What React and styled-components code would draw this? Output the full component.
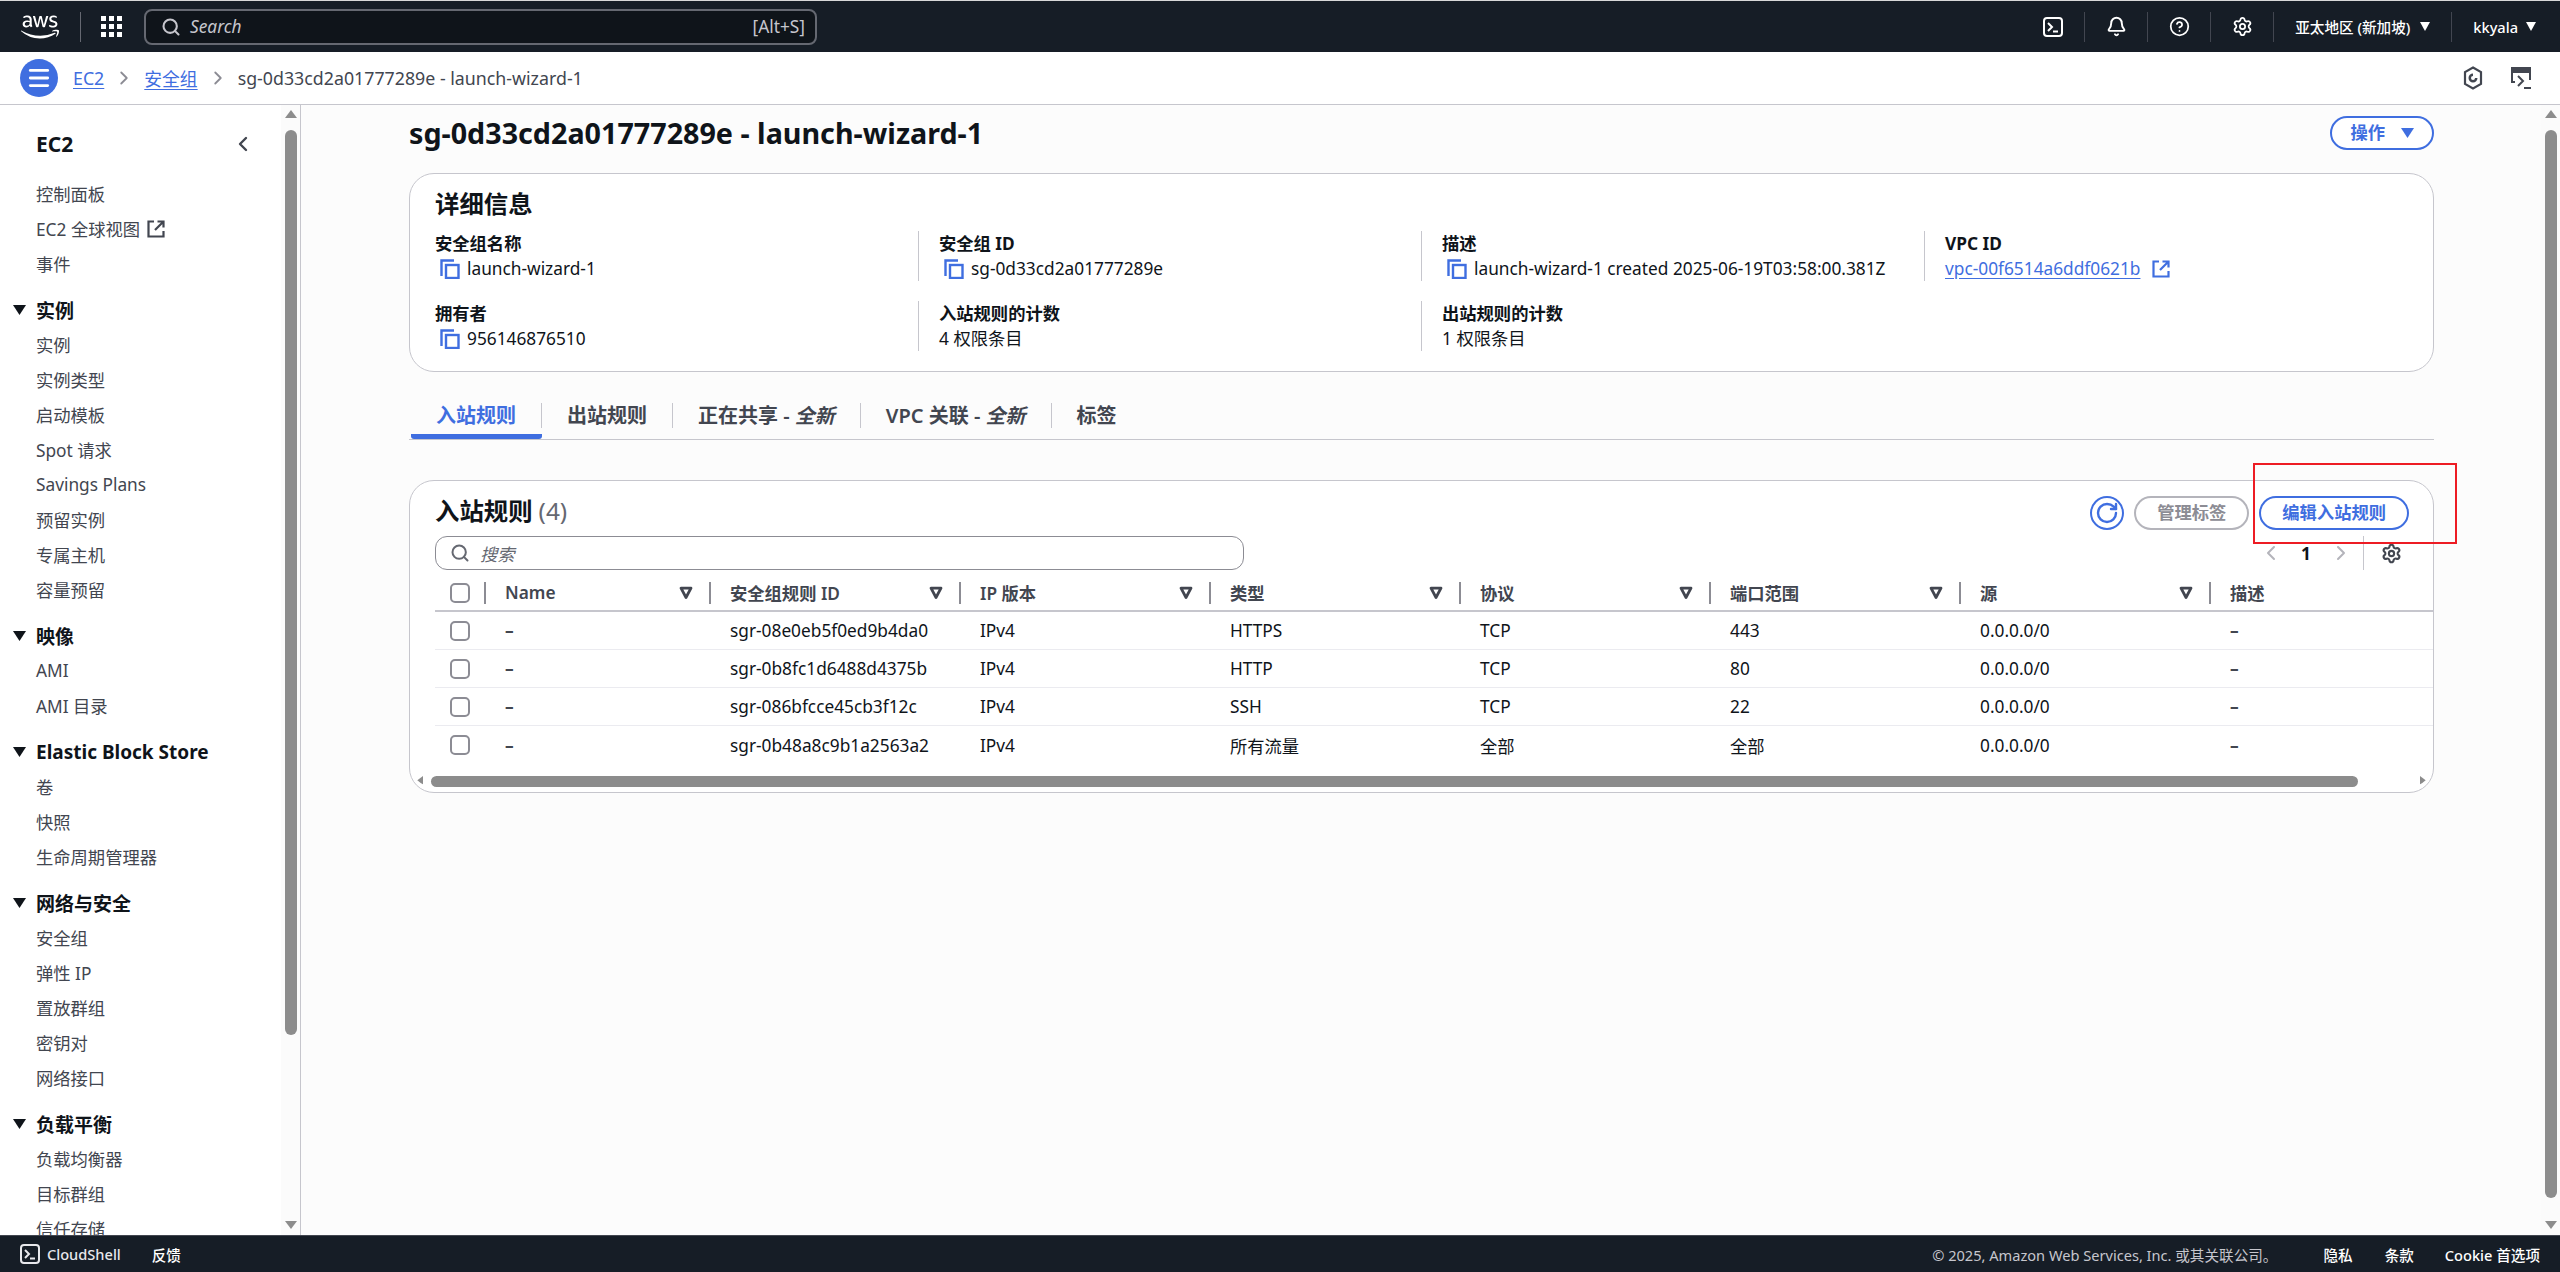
import React from 'react';
import styled, { createGlobalStyle } from 'styled-components';
import { FaAws } from 'react-icons/fa';
import {
  Bell,
  ChevronLeft,
  ChevronRight,
  CircleHelp,
  Menu,
  RotateCw,
  Search,
  Settings,
} from 'lucide-react';

const BLUE = '#3f6ee0';
const INK = '#0f141a';
const GREY = '#424650';
const LINE = '#c6c6cd';
const THUMB = '#8c8c8c';
const BAR = '#161d26';

const GlobalStyle = createGlobalStyle`
  html, body {
    margin: 0;
    height: 100%;
    overflow: hidden;
    background: #fff;
  }
  body {
    font-family: "Noto Sans", "Noto Sans CJK SC", sans-serif;
    font-size: 17.3px;
    color: ${INK};
  }
`;

const Page = styled.div`
  display: flex;
  flex-direction: column;
  height: 1272px;
`;

/* top navigation */
const TopBar = styled.header`
  display: flex;
  align-items: center;
  height: 52px;
  box-sizing: border-box;
  border-top: 1px solid #d8d8d8;
  background: ${BAR};
  color: #fff;
`;
const LogoBox = styled.div`
  display: flex;
  align-items: center;
  justify-content: center;
  width: 81px;
  height: 30px;
  box-sizing: border-box;
  border-right: 1px solid #656871;
  font-size: 38px;
`;
const AppGrid = styled.div`
  display: grid;
  grid-template-columns: repeat(3, 5px);
  grid-auto-rows: 5px;
  gap: 3px;
  margin: 0 22px 0 20px;
`;
const AppDot = styled.span`
  background: #fff;
`;
const SearchBox = styled.div`
  display: flex;
  align-items: center;
  width: 673px;
  height: 36px;
  box-sizing: border-box;
  padding: 0 10px 0 15px;
  border: 2px solid #656871;
  border-radius: 8px;
  background: #0f141a;
  color: #c6c6cd;
`;
const SearchHint = styled.span`
  flex: 1;
  margin-left: 9px;
  font-size: 17.3px;
  font-style: italic;
`;
const SearchKey = styled.span`
  font-size: 17.3px;
`;
const TopRight = styled.div`
  display: flex;
  align-items: center;
  margin-left: auto;
  padding-right: 3px;
`;
const TopCell = styled.div`
  display: flex;
  align-items: center;
  justify-content: center;
  width: 62px;
  height: 30px;
  border-right: 1px solid #424650;
`;
const TopMenu = styled.div`
  display: flex;
  align-items: center;
  gap: ${(p) => p.$gap || 10}px;
  height: 30px;
  padding: 0 ${(p) => p.$pad || 21}px 0 21px;
  font-size: 14.6px;
  font-weight: 500;
  border-right: ${(p) => (p.$last ? 'none' : '1px solid #424650')};
`;

/* breadcrumb strip */
const CrumbBar = styled.nav`
  display: flex;
  align-items: center;
  height: 53px;
  box-sizing: border-box;
  padding: 0 28px 0 20px;
  border-bottom: 1px solid ${LINE};
  background: #fff;
  font-size: 17.8px;
`;
const MenuButton = styled.div`
  display: flex;
  align-items: center;
  justify-content: center;
  width: 38px;
  height: 38px;
  margin-right: 15px;
  border-radius: 50%;
  background: ${BLUE};
  color: #fff;
`;
const CrumbLink = styled.a`
  color: ${BLUE};
  text-decoration: underline;
  text-underline-offset: 3px;
`;
const CrumbSep = styled.span`
  display: flex;
  width: 40px;
  justify-content: center;
  color: #8c8c94;
`;
const CrumbText = styled.span`
  color: ${GREY};
`;
const CrumbTools = styled.div`
  display: flex;
  align-items: center;
  gap: 27px;
  margin-left: auto;
  color: ${GREY};
`;

const Body = styled.div`
  flex: 1;
  display: flex;
  min-height: 0;
`;

/* left navigation */
const Sidebar = styled.aside`
  display: flex;
  width: 301px;
  flex: none;
  box-sizing: border-box;
  border-right: 1px solid ${LINE};
  overflow: hidden;
`;
const SideNav = styled.div`
  flex: 1;
  padding-top: 21px;
  min-width: 0;
`;
const SideTitle = styled.div`
  display: flex;
  align-items: center;
  justify-content: space-between;
  height: 36px;
  padding: 0 26px 0 36px;
  margin-bottom: 14px;
  font-size: 21px;
  font-weight: 700;
  color: ${GREY};
`;
const SideTitleText = styled.span`
  color: ${INK};
`;
const SideItem = styled.div`
  display: flex;
  align-items: center;
  gap: 7px;
  height: 35px;
  padding-left: 36px;
  color: ${GREY};
  white-space: nowrap;
`;
const SideSection = styled.div`
  display: flex;
  align-items: center;
  gap: 10px;
  height: 35px;
  margin-top: 11px;
  padding-left: 13px;
  font-size: 19px;
  font-weight: 700;
  white-space: nowrap;
`;
const Rail = styled.div`
  display: flex;
  flex-direction: column;
  align-items: center;
  flex: none;
  width: 19px;
  box-sizing: border-box;
  padding: 5px 0 6px;
  background: #fbfbfb;
`;
const RailThumb = styled.div`
  width: 12px;
  height: ${(p) => p.$size}px;
  margin-top: 12px;
  border-radius: 6px;
  background: ${THUMB};
`;
const RailDown = styled.div`
  margin-top: auto;
  display: flex;
`;

/* main column */
const Main = styled.main`
  flex: 1;
  min-width: 0;
  padding: 10px 107px 0 108px;
  background: #fcfcfc;
`;
const PageHead = styled.div`
  display: flex;
  align-items: center;
  justify-content: space-between;
  height: 36px;
  margin-bottom: 22px;
`;
const PageTitle = styled.h1`
  margin: 0;
  font-size: 28.7px;
  font-weight: 700;
  line-height: 36px;
`;
const PillButton = styled.button`
  display: flex;
  align-items: center;
  justify-content: center;
  gap: ${(p) => p.$gap || 0}px;
  height: 34px;
  box-sizing: border-box;
  padding: 0 ${(p) => p.$pad || 21}px;
  border: 2px solid ${(p) => (p.$off ? '#b4b4bb' : BLUE)};
  border-radius: 17px;
  background: #fff;
  color: ${(p) => (p.$off ? '#8c8c94' : BLUE)};
  font-family: inherit;
  font-size: 17.3px;
  font-weight: 700;
  line-height: 1;
`;
const Card = styled.section`
  position: relative;
  box-sizing: border-box;
  border: 1px solid ${LINE};
  border-radius: 25px;
  background: #fff;
`;
const DetailCard = styled(Card)`
  height: 199px;
  padding: 14px 25px 0;
`;
const CardTitle = styled.h2`
  margin: 0;
  font-size: 24.4px;
  font-weight: 700;
  line-height: 31px;
`;
const DetailGrid = styled.div`
  display: grid;
  grid-template-columns: 483px 503px 503px 1fr;
  grid-auto-rows: 50px;
  row-gap: 20px;
  margin-top: 12px;
`;
const Field = styled.div`
  padding-left: ${(p) => (p.$first ? 0 : 20)}px;
  border-left: ${(p) => (p.$first ? 'none' : '1px solid #c6c6cd')};
`;
const FieldLabel = styled.div`
  font-weight: 700;
  line-height: 25px;
`;
const FieldValue = styled.div`
  display: flex;
  align-items: center;
  gap: 7px;
  line-height: 25px;
  white-space: nowrap;
`;
const CopyWrap = styled.span`
  display: flex;
  margin-left: 5px;
  color: ${BLUE};
`;
const ValueLink = styled.a`
  color: ${BLUE};
  text-decoration: underline;
  text-underline-offset: 3px;
`;

/* tabs */
const TabRow = styled.div`
  display: flex;
  align-items: flex-start;
  height: 68px;
  box-sizing: border-box;
  margin-bottom: 40px;
  padding: 28px 0 0 2px;
  border-bottom: 1px solid ${LINE};
`;
const Tab = styled.div`
  height: 39px;
  box-sizing: border-box;
  padding-top: 3px;
  border-bottom: 5px solid ${(p) => (p.$active ? BLUE : 'transparent')};
  border-radius: 0 0 3px 3px;
`;
const TabLabel = styled.div`
  height: 25px;
  padding: 0 25px;
  font-size: 20px;
  font-weight: 600;
  line-height: 25px;
  white-space: nowrap;
  color: ${(p) => (p.$active ? BLUE : GREY)};
  border-right: ${(p) => (p.$last ? 'none' : '1px solid #c6c6cd')};
`;

/* rules table */
const RulesCard = styled(Card)`
  height: 313px;
  padding-top: 15px;
`;
const RulesHead = styled.div`
  display: flex;
  align-items: center;
  height: 34px;
  padding: 0 24px 0 25px;
`;
const RulesTitle = styled(CardTitle)`
  margin-top: -5px;
`;
const RulesCount = styled.span`
  margin-left: 6px;
  font-weight: 400;
  color: #656871;
`;
const RulesActions = styled.div`
  display: flex;
  align-items: center;
  gap: 10px;
  margin-left: auto;
`;
const RoundIcon = styled.div`
  display: flex;
  align-items: center;
  justify-content: center;
  width: 34px;
  height: 34px;
  box-sizing: border-box;
  border: 2px solid ${BLUE};
  border-radius: 50%;
  background: #fff;
  color: ${BLUE};
`;
const Callout = styled.div`
  position: absolute;
  left: 1843px;
  top: -18px;
  width: 204px;
  height: 81px;
  box-sizing: border-box;
  border: 2px solid #ed1c24;
  pointer-events: none;
`;
const FilterRow = styled.div`
  display: flex;
  align-items: center;
  justify-content: space-between;
  height: 34px;
  margin-top: 6px;
  padding: 0 31px 0 25px;
`;
const FilterBox = styled.div`
  display: flex;
  align-items: center;
  gap: 10px;
  width: 809px;
  height: 34px;
  box-sizing: border-box;
  padding: 0 14px;
  border: 1px solid #8c8c94;
  border-radius: 12px;
  color: #656871;
  background: #fff;
`;
const FilterHint = styled.span`
  font-style: italic;
  font-size: 17.3px;
`;
const Pager = styled.div`
  display: flex;
  align-items: center;
  color: #b4b4bb;
`;
const PagerNum = styled.span`
  width: 22px;
  margin: 0 12px;
  text-align: center;
  color: ${INK};
  font-weight: 700;
`;
const PagerPrefs = styled.div`
  display: flex;
  align-items: center;
  height: 34px;
  margin-left: 10px;
  padding-left: 17px;
  border-left: 1px solid ${LINE};
  color: ${GREY};
`;
const TableClip = styled.div`
  overflow: hidden;
  margin-top: 5px;
  border-radius: 0 0 24px 24px;
`;
const Row = styled.div`
  display: grid;
  grid-template-columns: 49px 225px repeat(6, 250px) 224px;
  align-items: center;
  margin-left: 25px;
  height: ${(p) => (p.$head ? 37 : 38)}px;
  box-sizing: border-box;
  border-bottom: ${(p) => (p.$head ? '2px solid #c6c6cd' : p.$last ? 'none' : '1px solid #ebebf0')};
`;
const HeadCell = styled.div`
  display: flex;
  align-items: center;
  justify-content: space-between;
  height: 22px;
  padding: 0 16px 0 19px;
  color: ${GREY};
  font-weight: 600;
  border-left: 2px solid #8c8c94;
  white-space: nowrap;
`;
const Cell = styled.div`
  padding-left: 21px;
  white-space: nowrap;
`;
const DashCell = styled(Cell)`
  font-weight: 700;
  color: ${GREY};
`;
const BoxCell = styled.div`
  padding-left: 15px;
  display: flex;
`;
const CheckBox = styled.span`
  width: 20px;
  height: 20px;
  box-sizing: border-box;
  border: 2px solid #8c8c94;
  border-radius: 5px;
  background: #fff;
`;
const HScroll = styled.div`
  display: flex;
  align-items: center;
  height: 11px;
  margin-top: 12px;
  padding: 0 5px;
`;
const HThumb = styled.div`
  width: 1927px;
  height: 11px;
  margin-left: 8px;
  border-radius: 6px;
  background: ${THUMB};
`;
const HEnd = styled.div`
  display: flex;
  margin-left: auto;
`;

/* footer */
const Footer = styled.footer`
  display: flex;
  align-items: center;
  height: 37px;
  padding: 0 20px;
  background: ${BAR};
  border-top: 1px solid #424650;
  box-sizing: border-box;
  color: #e8e8ec;
  font-size: 14.6px;
`;
const FootShell = styled.div`
  display: flex;
  align-items: center;
  gap: 7px;
  font-weight: 500;
`;
const FootLink = styled.span`
  margin-left: ${(p) => p.$gap || 0}px;
  font-weight: 500;
  color: #fff;
`;
const FootNote = styled.span`
  margin-left: auto;
  color: #c6c6cd;
`;

const Triangle = ({ dir = 'down', w = 12, h = 8, color = 'currentColor' }) => {
  const points = {
    down: `0,0 ${w},0 ${w / 2},${h}`,
    up: `0,${h} ${w},${h} ${w / 2},0`,
    left: `${w},0 ${w},${h} 0,${h / 2}`,
    right: `0,0 ${w},${h / 2} 0,${h}`,
  };
  return (
    <svg width={w} height={h} viewBox={`0 0 ${w} ${h}`}>
      <polygon points={points[dir]} fill={color} />
    </svg>
  );
};

const SortIcon = () => (
  <svg width="14" height="14" viewBox="0 0 14 14">
    <polygon points="2,2.2 12,2.2 7,11.5" fill="none" stroke="#424650" strokeWidth="2.8" strokeLinejoin="round" />
  </svg>
);

const CopyIcon = () => (
  <CopyWrap>
    <svg width="20" height="20" viewBox="0 0 20 20" fill="none" stroke="currentColor" strokeWidth="2.4">
      <path d="M1.5 17V1.5H14" />
      <rect x="6" y="6" width="12.5" height="13" />
    </svg>
  </CopyWrap>
);

const ExternalIcon = ({ size = 18 }) => (
  <svg width={size} height={size} viewBox="0 0 18 18" fill="none" stroke="currentColor" strokeWidth="2.2">
    <path d="M7 1.5H1.5v15h15V11" />
    <path d="M8 10l8-8M10.5 1.5h6v6" />
  </svg>
);

const ShellIcon = ({ size = 20, stroke = 2 }) => (
  <svg width={size} height={size} viewBox="0 0 20 20" fill="none" stroke="currentColor" strokeWidth={stroke}>
    <rect x="1" y="1" width="18" height="18" rx="3" />
    <path d="M5 6l4 4-4 4M10 14.5h5" />
  </svg>
);

const HexIcon = () => (
  <svg width="20" height="24" viewBox="0 0 20 24" fill="none" stroke="currentColor" strokeWidth="2.2">
    <path d="M10 1.5l8 4.6v11.8l-8 4.6-8-4.6V6.1z" />
    <path d="M10 7.5a4.5 4.5 0 1 0 4.5 4.5H10z" fill="currentColor" stroke="none" />
    <circle cx="10" cy="12" r="2" fill="#fff" stroke="none" />
  </svg>
);

const ScreenIcon = () => (
  <svg width="22" height="24" viewBox="0 0 22 24" fill="none" stroke="currentColor" strokeWidth="2">
    <path d="M5 16H2V2h18v12" />
    <path d="M2 2h18v4H2z" fill="currentColor" />
    <path d="M8 10l5 5-5 5M14 22h7" />
  </svg>
);

const Rails = ({ size }) => (
  <Rail>
    <Triangle dir="up" color={THUMB} />
    <RailThumb $size={size} />
    <RailDown>
      <Triangle dir="down" color={THUMB} />
    </RailDown>
  </Rail>
);

const navGroups = [
  { items: [['控制面板'], ['EC2 全球视图', true], ['事件']] },
  {
    title: '实例',
    items: [['实例'], ['实例类型'], ['启动模板'], ['Spot 请求'], ['Savings Plans'], ['预留实例'], ['专属主机'], ['容量预留']],
  },
  { title: '映像', items: [['AMI'], ['AMI 目录']] },
  { title: 'Elastic Block Store', items: [['卷'], ['快照'], ['生命周期管理器']] },
  { title: '网络与安全', items: [['安全组'], ['弹性 IP'], ['置放群组'], ['密钥对'], ['网络接口']] },
  { title: '负载平衡', items: [['负载均衡器'], ['目标群组'], ['信任存储']] },
];

const fields = [
  { label: '安全组名称', value: 'launch-wizard-1', copy: true },
  { label: '安全组 ID', value: 'sg-0d33cd2a01777289e', copy: true },
  { label: '描述', value: 'launch-wizard-1 created 2025-06-19T03:58:00.381Z', copy: true },
  { label: 'VPC ID', value: 'vpc-00f6514a6ddf0621b', link: true },
  { label: '拥有者', value: '956146876510', copy: true },
  { label: '入站规则的计数', value: '4 权限条目' },
  { label: '出站规则的计数', value: '1 权限条目' },
];

const tabs = [
  { label: '入站规则', active: true },
  { label: '出站规则' },
  { label: '正在共享 - ', tag: '全新' },
  { label: 'VPC 关联 - ', tag: '全新' },
  { label: '标签' },
];

const columns = ['Name', '安全组规则 ID', 'IP 版本', '类型', '协议', '端口范围', '源', '描述'];

const rules = [
  ['sgr-08e0eb5f0ed9b4da0', 'IPv4', 'HTTPS', 'TCP', '443'],
  ['sgr-0b8fc1d6488d4375b', 'IPv4', 'HTTP', 'TCP', '80'],
  ['sgr-086bfcce45cb3f12c', 'IPv4', 'SSH', 'TCP', '22'],
  ['sgr-0b48a8c9b1a2563a2', 'IPv4', '所有流量', '全部', '全部'],
];

export default function App() {
  return (
    <Page>
      <GlobalStyle />
      <TopBar>
        <LogoBox>
          <FaAws />
        </LogoBox>
        <AppGrid>
          {Array.from({ length: 9 }, (_, i) => (
            <AppDot key={i} />
          ))}
        </AppGrid>
        <SearchBox>
          <Search size={20} strokeWidth={2.5} />
          <SearchHint>Search</SearchHint>
          <SearchKey>[Alt+S]</SearchKey>
        </SearchBox>
        <TopRight>
          <TopCell>
            <ShellIcon size={20} />
          </TopCell>
          <TopCell>
            <Bell size={21} strokeWidth={2.2} />
          </TopCell>
          <TopCell>
            <CircleHelp size={21} strokeWidth={2} />
          </TopCell>
          <TopCell>
            <Settings size={21} strokeWidth={2} />
          </TopCell>
          <TopMenu>
            亚太地区 (新加坡)
            <Triangle w={10} h={9} color="#fff" />
          </TopMenu>
          <TopMenu $last $pad={0} $gap={8}>
            kkyala
            <Triangle w={10} h={9} color="#fff" />
          </TopMenu>
        </TopRight>
      </TopBar>

      <CrumbBar>
        <MenuButton>
          <Menu size={26} strokeWidth={2.6} />
        </MenuButton>
        <CrumbLink>EC2</CrumbLink>
        <CrumbSep>
          <ChevronRight size={22} />
        </CrumbSep>
        <CrumbLink>安全组</CrumbLink>
        <CrumbSep>
          <ChevronRight size={22} />
        </CrumbSep>
        <CrumbText>sg-0d33cd2a01777289e - launch-wizard-1</CrumbText>
        <CrumbTools>
          <HexIcon />
          <ScreenIcon />
        </CrumbTools>
      </CrumbBar>

      <Body>
        <Sidebar>
          <SideNav>
            <SideTitle>
              <SideTitleText>EC2</SideTitleText>
              <ChevronLeft size={24} strokeWidth={2.4} />
            </SideTitle>
            {navGroups.map((group, i) => (
              <div key={i}>
                {group.title && (
                  <SideSection>
                    <Triangle w={13} h={10} color={INK} />
                    {group.title}
                  </SideSection>
                )}
                {group.items.map(([text, external]) => (
                  <SideItem key={text}>
                    {text}
                    {external && <ExternalIcon />}
                  </SideItem>
                ))}
              </div>
            ))}
          </SideNav>
          <Rails size={905} />
        </Sidebar>

        <Main>
          <PageHead>
            <PageTitle>sg-0d33cd2a01777289e - launch-wizard-1</PageTitle>
            <PillButton $pad={18} $gap={16}>
              操作
              <Triangle w={13} h={10} color={BLUE} />
            </PillButton>
          </PageHead>

          <DetailCard>
            <CardTitle>详细信息</CardTitle>
            <DetailGrid>
              {fields.map((f, i) => (
                <Field key={f.label} $first={i % 4 === 0}>
                  <FieldLabel>{f.label}</FieldLabel>
                  <FieldValue>
                    {f.copy && <CopyIcon />}
                    {f.link ? (
                      <ValueLink>{f.value}</ValueLink>
                    ) : (
                      f.value
                    )}
                    {f.link && (
                      <CopyWrap>
                        <ExternalIcon />
                      </CopyWrap>
                    )}
                  </FieldValue>
                </Field>
              ))}
            </DetailGrid>
          </DetailCard>

          <TabRow>
            {tabs.map((t, i) => (
              <Tab key={t.label} $active={t.active}>
                <TabLabel $active={t.active} $last={i === tabs.length - 1}>
                  {t.label}
                  {t.tag && <em>{t.tag}</em>}
                </TabLabel>
              </Tab>
            ))}
          </TabRow>

          <RulesCard>
            <RulesHead>
              <RulesTitle>
                入站规则<RulesCount>(4)</RulesCount>
              </RulesTitle>
              <RulesActions>
                <RoundIcon>
                  <RotateCw size={24} strokeWidth={2.4} />
                </RoundIcon>
                <PillButton $off>管理标签</PillButton>
                <PillButton>编辑入站规则</PillButton>
              </RulesActions>
            </RulesHead>
            <Callout />
            <FilterRow>
              <FilterBox>
                <Search size={20} strokeWidth={2.4} />
                <FilterHint>搜索</FilterHint>
              </FilterBox>
              <Pager>
                <ChevronLeft size={24} />
                <PagerNum>1</PagerNum>
                <ChevronRight size={24} />
                <PagerPrefs>
                  <Settings size={21} strokeWidth={2.4} />
                </PagerPrefs>
              </Pager>
            </FilterRow>
            <TableClip>
              <Row $head>
                <BoxCell>
                  <CheckBox />
                </BoxCell>
                {columns.map((c, i) => (
                  <HeadCell key={c}>
                    {c}
                    {i < columns.length - 1 && <SortIcon />}
                  </HeadCell>
                ))}
              </Row>
              {rules.map((r, i) => (
                <Row key={r[0]} $last={i === rules.length - 1}>
                  <BoxCell>
                    <CheckBox />
                  </BoxCell>
                  <DashCell>–</DashCell>
                  {r.map((v, j) => (
                    <Cell key={j}>{v}</Cell>
                  ))}
                  <Cell>0.0.0.0/0</Cell>
                  <DashCell>–</DashCell>
                </Row>
              ))}
              <HScroll>
                <Triangle dir="left" w={8} h={12} color={THUMB} />
                <HThumb />
                <HEnd>
                  <Triangle dir="right" w={8} h={12} color={THUMB} />
                </HEnd>
              </HScroll>
            </TableClip>
          </RulesCard>
        </Main>
        <Rails size={1068} />
      </Body>

      <Footer>
        <FootShell>
          <ShellIcon size={20} stroke={2} />
          CloudShell
        </FootShell>
        <FootLink $gap={31}>反馈</FootLink>
        <FootNote>© 2025, Amazon Web Services, Inc. 或其关联公司。</FootNote>
        <FootLink $gap={46}>隐私</FootLink>
        <FootLink $gap={32}>条款</FootLink>
        <FootLink $gap={31}>Cookie 首选项</FootLink>
      </Footer>
    </Page>
  );
}
